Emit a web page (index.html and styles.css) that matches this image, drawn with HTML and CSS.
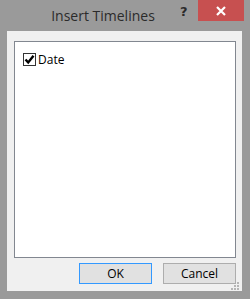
FILE: index.html
```html
<!DOCTYPE html>
<html lang="en">

<head>
    <meta charset="UTF-8">
    <title>Insert Timelines</title>
    <link rel="stylesheet" href="styles.css">
</head>

<body>
    <div class="dialog">
        <div class="title_bar">
            <span class="title">Insert Timelines</span>
            <span class="help">?</span>
            <span class="close">
                <svg width="12" height="10" viewBox="0 0 12 10">
                    <path d="M2 1 L10 9 M10 1 L2 9" stroke="#fff" stroke-width="2.2" fill="none"/>
                </svg>
            </span>
        </div>

        <div class="client">
            <div class="field_list">
                <label class="field">
                    <span class="check_box">
                        <svg width="11" height="11" viewBox="0 0 11 11">
                            <path d="M1.5 5.5 L4.2 8.5 L9.5 1.8" stroke="#000" stroke-width="2.4" fill="none"/>
                        </svg>
                    </span>
                    Date
                </label>
            </div>

            <div class="buttons">
                <button class="btn default">OK</button>
                <button class="btn">Cancel</button>
            </div>

            <!-- size grip -->
            <svg class="grip" width="10" height="10" viewBox="0 0 10 10">
                <rect x="6" y="0" width="2" height="2" fill="#b5b5b5"/>
                <rect x="3" y="3" width="2" height="2" fill="#b5b5b5"/>
                <rect x="6" y="3" width="2" height="2" fill="#b5b5b5"/>
                <rect x="0" y="6" width="2" height="2" fill="#b5b5b5"/>
                <rect x="3" y="6" width="2" height="2" fill="#b5b5b5"/>
                <rect x="6" y="6" width="2" height="2" fill="#b5b5b5"/>
            </svg>
        </div>
    </div>
</body>

</html>
```

FILE: styles.css
```css
* {
    margin: 0;
    padding: 0;
    box-sizing: border-box;
}

body {
    font-family: "Open Sans", "Noto Sans", sans-serif;
    background-color: #9a9a9a;
}

.dialog {
    width: 250px;
    height: 299px;
    background-color: #9a9a9a;
    display: flex;
    flex-direction: column;
}

.title_bar {
    height: 31px;
    position: relative;
    display: flex;
    align-items: center;
    justify-content: center;
}

.title {
    font-size: 14px;
    color: #2b2b2b;
    margin-left: -44px;
    margin-top: -1px;
}

.help {
    position: absolute;
    left: 180px;
    top: 4px;
    font-size: 13px;
    font-weight: bold;
    color: #2b2b2b;
    font-family: "DejaVu Sans", sans-serif;
}

.close {
    position: absolute;
    left: 198px;
    top: 0;
    width: 46px;
    height: 21px;
    background-color: #c75050;
    display: flex;
    align-items: center;
    justify-content: center;
}

.client {
    flex: 1;
    margin: 0 8px 8px 7px;
    background-color: #f0f0f0;
    padding: 10px 6px 7px 7px;
    display: flex;
    flex-direction: column;
    position: relative;
}

.field_list {
    flex: 1;
    background-color: #fff;
    border: 1px solid #828790;
    padding: 9px 8px;
}

.field {
    display: flex;
    align-items: center;
    gap: 2px;
    font-size: 12px;
    color: #000;
}

.check_box {
    width: 13px;
    height: 13px;
    border: 1px solid #333;
    background-color: #fff;
    display: flex;
    align-items: center;
    justify-content: center;
}

.buttons {
    display: flex;
    justify-content: flex-end;
    gap: 11px;
    margin-top: 5px;
}

.btn {
    width: 73px;
    height: 21px;
    font-family: "Open Sans", "Noto Sans", sans-serif;
    font-size: 12px;
    color: #000;
    background-color: #e1e1e1;
    border: 1px solid #adadad;
}

.btn.default {
    border-color: #3399ff;
}

.grip {
    position: absolute;
    right: 1px;
    bottom: -1px;
}
```
